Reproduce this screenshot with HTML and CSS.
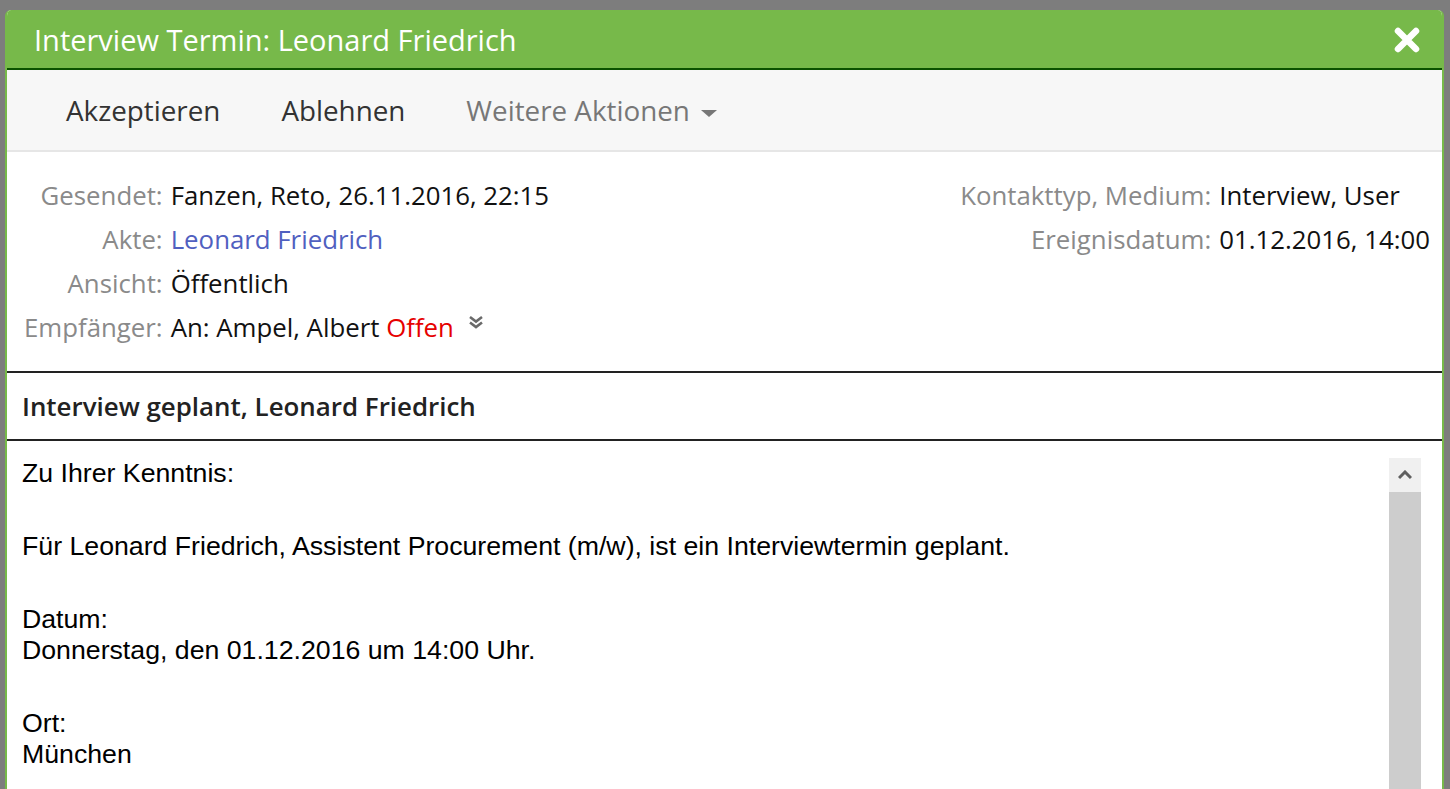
FILE: index.html
```html
<!DOCTYPE html>
<html lang="de">
<head>
    <meta charset="UTF-8">
    <meta name="viewport" content="width=device-width, initial-scale=1.0">
    <title>Interview Termin</title>
    <link rel="stylesheet" href="styles.css">
</head>
<body>
    <div class="modal">
        <div class="modal-header">
            <h1>Interview Termin: Leonard Friedrich</h1>
            <!-- Close -->
            <svg class="close" width="26" height="26" viewBox="0 0 26 26">
                <path d="M4 4 L22 22 M22 4 L4 22" stroke="#ffffff" stroke-width="6.5" stroke-linecap="round"/>
            </svg>
        </div>

        <div class="toolbar">
            <span class="action">Akzeptieren</span>
            <span class="action">Ablehnen</span>
            <span class="action muted">Weitere Aktionen <span class="caret"></span></span>
        </div>

        <div class="details">
            <div class="meta">
                <span class="label">Gesendet:</span>
                <span class="value">Fanzen, Reto, 26.11.2016, 22:15</span>
                <span class="label">Akte:</span>
                <span class="value"><a href="#">Leonard Friedrich</a></span>
                <span class="label">Ansicht:</span>
                <span class="value">Öffentlich</span>
                <span class="label">Empfänger:</span>
                <span class="value">An: Ampel, Albert <span class="status">Offen</span>
                    <svg class="more" width="16" height="14" viewBox="0 0 16 14">
                        <path d="M2 2 L8 6.5 L14 2 M2 7.5 L8 12 L14 7.5" fill="none" stroke="#6a6a6a" stroke-width="2.6"/>
                    </svg>
                </span>
            </div>
            <div class="meta">
                <span class="label">Kontakttyp, Medium:</span>
                <span class="value">Interview, User</span>
                <span class="label">Ereignisdatum:</span>
                <span class="value">01.12.2016, 14:00</span>
            </div>
        </div>

        <div class="subject">Interview geplant, Leonard Friedrich</div>

        <div class="message">
            <div class="message-text">
                <p>Zu Ihrer Kenntnis:</p>
                <p>Für Leonard Friedrich, Assistent Procurement (m/w), ist ein Interviewtermin geplant.</p>
                <p>Datum:<br>Donnerstag, den 01.12.2016 um 14:00 Uhr.</p>
                <p>Ort:<br>München</p>
            </div>
            <!-- Scrollbar -->
            <div class="scrollbar">
                <div class="scroll-up">
                    <svg width="14" height="10" viewBox="0 0 14 10">
                        <path d="M1 8 L7 2 L13 8" fill="none" stroke="#606060" stroke-width="3"/>
                    </svg>
                </div>
                <div class="scroll-thumb"></div>
            </div>
        </div>
    </div>
</body>
</html>
```

FILE: styles.css
```css
html, body {
    height: 100%;
}

body {
    margin: 0;
    background-color: #7d7d7d;
    font-family: "Open Sans", sans-serif;
    overflow: hidden;
}

.modal {
    margin: 10px 6px 0 5px;
    height: 779px;
    background: #ffffff;
    border-left: 2px solid #77b94a;
    border-right: 2px solid #77b94a;
    border-radius: 6px 6px 0 0;
    display: flex;
    flex-direction: column;
    overflow: hidden;
}

.modal-header {
    background-color: #77b94a;
    height: 58px;
    border-bottom: 2px solid #0b5200;
    display: flex;
    align-items: center;
    justify-content: space-between;
    padding: 0 22px 0 27px;
    flex-shrink: 0;
}

.modal-header h1 {
    margin: 0;
    color: #ffffff;
    font-size: 29px;
    font-weight: 400;
}

.close {
    margin-top: 2px;
}

.toolbar {
    background-color: #f7f7f7;
    height: 80px;
    border-bottom: 2px solid #e6e6e6;
    display: flex;
    align-items: center;
    gap: 61px;
    padding-left: 59px;
    flex-shrink: 0;
}

.action {
    font-size: 27.8px;
    color: #333333;
}

.action.muted {
    color: #777777;
}

.caret {
    display: inline-block;
    width: 0;
    height: 0;
    border-left: 8px solid transparent;
    border-right: 8px solid transparent;
    border-top: 7px solid #777777;
    margin-left: 4px;
    vertical-align: middle;
}

.details {
    display: flex;
    justify-content: space-between;
    padding: 21px 12px 22px 17px;
    border-bottom: 2px solid #222222;
    flex-shrink: 0;
}

.meta {
    display: grid;
    grid-template-columns: auto auto;
    grid-auto-rows: 44px;
    column-gap: 8px;
    align-items: center;
    align-content: start;
    font-size: 25.8px;
}

.label {
    text-align: right;
    color: #8a8a8a;
}

.value {
    color: #111111;
}

.value a {
    color: #5060c0;
    text-decoration: none;
}

.status {
    color: #e60000;
}

.more {
    margin-left: 7px;
    vertical-align: 8px;
}

.subject {
    height: 66px;
    display: flex;
    align-items: center;
    padding-left: 15px;
    font-size: 25.9px;
    font-weight: 600;
    color: #222222;
    border-bottom: 2px solid #222222;
    flex-shrink: 0;
}

.message {
    flex: 1;
    display: flex;
    overflow: hidden;
}

.message-text {
    flex: 1;
    padding: 17px 0 0 15px;
    font-family: "Liberation Sans", Arial, sans-serif;
    font-size: 26.7px;
    line-height: 31px;
    color: #000000;
}

.message-text p {
    margin: 0 0 42px;
}

.scrollbar {
    width: 32px;
    margin: 17px 21px 0 0;
    display: flex;
    flex-direction: column;
}

.scroll-up {
    height: 34px;
    background-color: #f0f0f0;
    display: flex;
    align-items: center;
    justify-content: center;
}

.scroll-thumb {
    flex: 1;
    background-color: #cdcdcd;
}
```
